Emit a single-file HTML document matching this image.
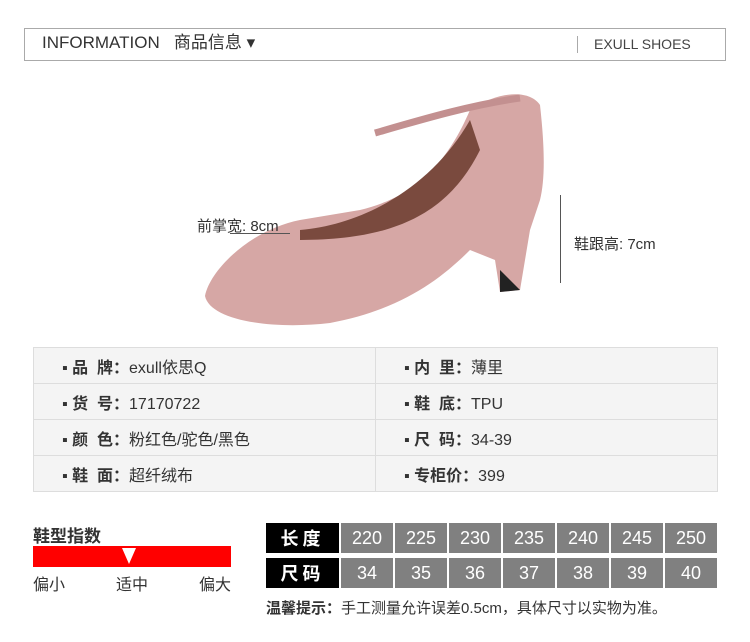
<html><head><style>
body{margin:0;width:750px;height:642px;background:#fff;font-family:"Liberation Sans","Noto Sans CJK SC",sans-serif;position:relative;overflow:hidden;color:#333}
.a{position:absolute}
.hdr{left:24px;top:28px;width:700px;height:31px;border:1px solid #aaa}
td{border:1px solid #ddd;background:#f4f4f4;font-size:16px;color:#333;padding:0 0 0 28px;height:36px}
td b{font-weight:bold}
.sz td{border:none;padding:0;text-align:center;height:30px;font-size:18px;color:#fff;background:#808080;width:52px}
.sz td.k{background:#000;font-weight:bold;width:73px;letter-spacing:4px}
</style></head><body>
<div class="a hdr"></div>
<div class="a" style="left:42px;top:33px;font-size:17px;line-height:20px;color:#333">INFORMATION&nbsp;&nbsp;&nbsp;商品信息 ▾</div>
<div class="a" style="left:577px;top:36px;width:1px;height:17px;background:#aaa"></div>
<div class="a" style="left:594px;top:35px;font-size:14px;line-height:18px;color:#444">EXULL SHOES</div>
<svg class="a" style="left:0;top:60px" width="750" height="280">
<path d="M205,236 C210,210 250,170 300,160 L360,150 C400,140 440,120 470,50 C500,30 530,30 540,45 C545,90 545,120 540,140 L530,170 L520,230 L500,232 L495,200 L470,190 C440,220 400,250 330,263 C270,270 210,260 205,236Z" fill="#d6a7a5"/>
<path d="M300,170 C360,165 430,130 470,60 L480,90 C450,150 400,180 300,180Z" fill="#7a4a3e"/>
<path d="M375,73 C420,60 470,45 520,38" stroke="#c39090" stroke-width="7" fill="none"/>
<path d="M500,210 L520,230 L500,232Z" fill="#222"/>
</svg>
<div class="a" style="left:197px;top:215px;font-size:15px">前掌宽: 8cm</div>
<div class="a" style="left:230px;top:233px;width:60px;height:1px;background:#555"></div>
<div class="a" style="left:560px;top:195px;width:1px;height:88px;background:#555"></div>
<div class="a" style="left:574px;top:233px;font-size:15px">鞋跟高: 7cm</div>
<table class="a" style="left:33px;top:347px;width:685px;border-collapse:collapse">
<tr><td style="width:313px">▪ <b>品&nbsp;&nbsp;牌：</b>exull依思Q</td><td>▪ <b>内&nbsp;&nbsp;里：</b>薄里</td></tr>
<tr><td>▪ <b>货&nbsp;&nbsp;号：</b>17170722</td><td>▪ <b>鞋&nbsp;&nbsp;底：</b>TPU</td></tr>
<tr><td>▪ <b>颜&nbsp;&nbsp;色：</b>粉红色/驼色/黑色</td><td>▪ <b>尺&nbsp;&nbsp;码：</b>34-39</td></tr>
<tr><td>▪ <b>鞋&nbsp;&nbsp;面：</b>超纤绒布</td><td>▪ <b>专柜价：</b>399</td></tr>
</table>
<div class="a" style="left:33px;top:522px;font-size:17px;font-weight:bold">鞋型指数</div>
<div class="a" style="left:33px;top:546px;width:198px;height:21px;background:#f00"></div>
<div class="a" style="left:122px;top:548px;width:0;height:0;border-left:7px solid transparent;border-right:7px solid transparent;border-top:16px solid #fff"></div>
<div class="a" style="left:33px;top:571px;width:198px;font-size:16px;display:flex;justify-content:space-between"><span>偏小</span><span>适中</span><span>偏大</span></div>
<table class="a sz" style="left:266px;top:523px;border-collapse:separate;border-spacing:2px 0;margin-left:-2px">
<tr><td class="k">长度</td><td>220</td><td>225</td><td>230</td><td>235</td><td>240</td><td>245</td><td>250</td></tr>
<tr><td colspan="8" style="height:5px;background:#fff"></td></tr>
<tr><td class="k">尺码</td><td>34</td><td>35</td><td>36</td><td>37</td><td>38</td><td>39</td><td>40</td></tr>
</table>
<div class="a" style="left:266px;top:597px;font-size:15px"><b>温馨提示：</b>手工测量允许误差0.5cm，具体尺寸以实物为准。</div>
</body></html>
